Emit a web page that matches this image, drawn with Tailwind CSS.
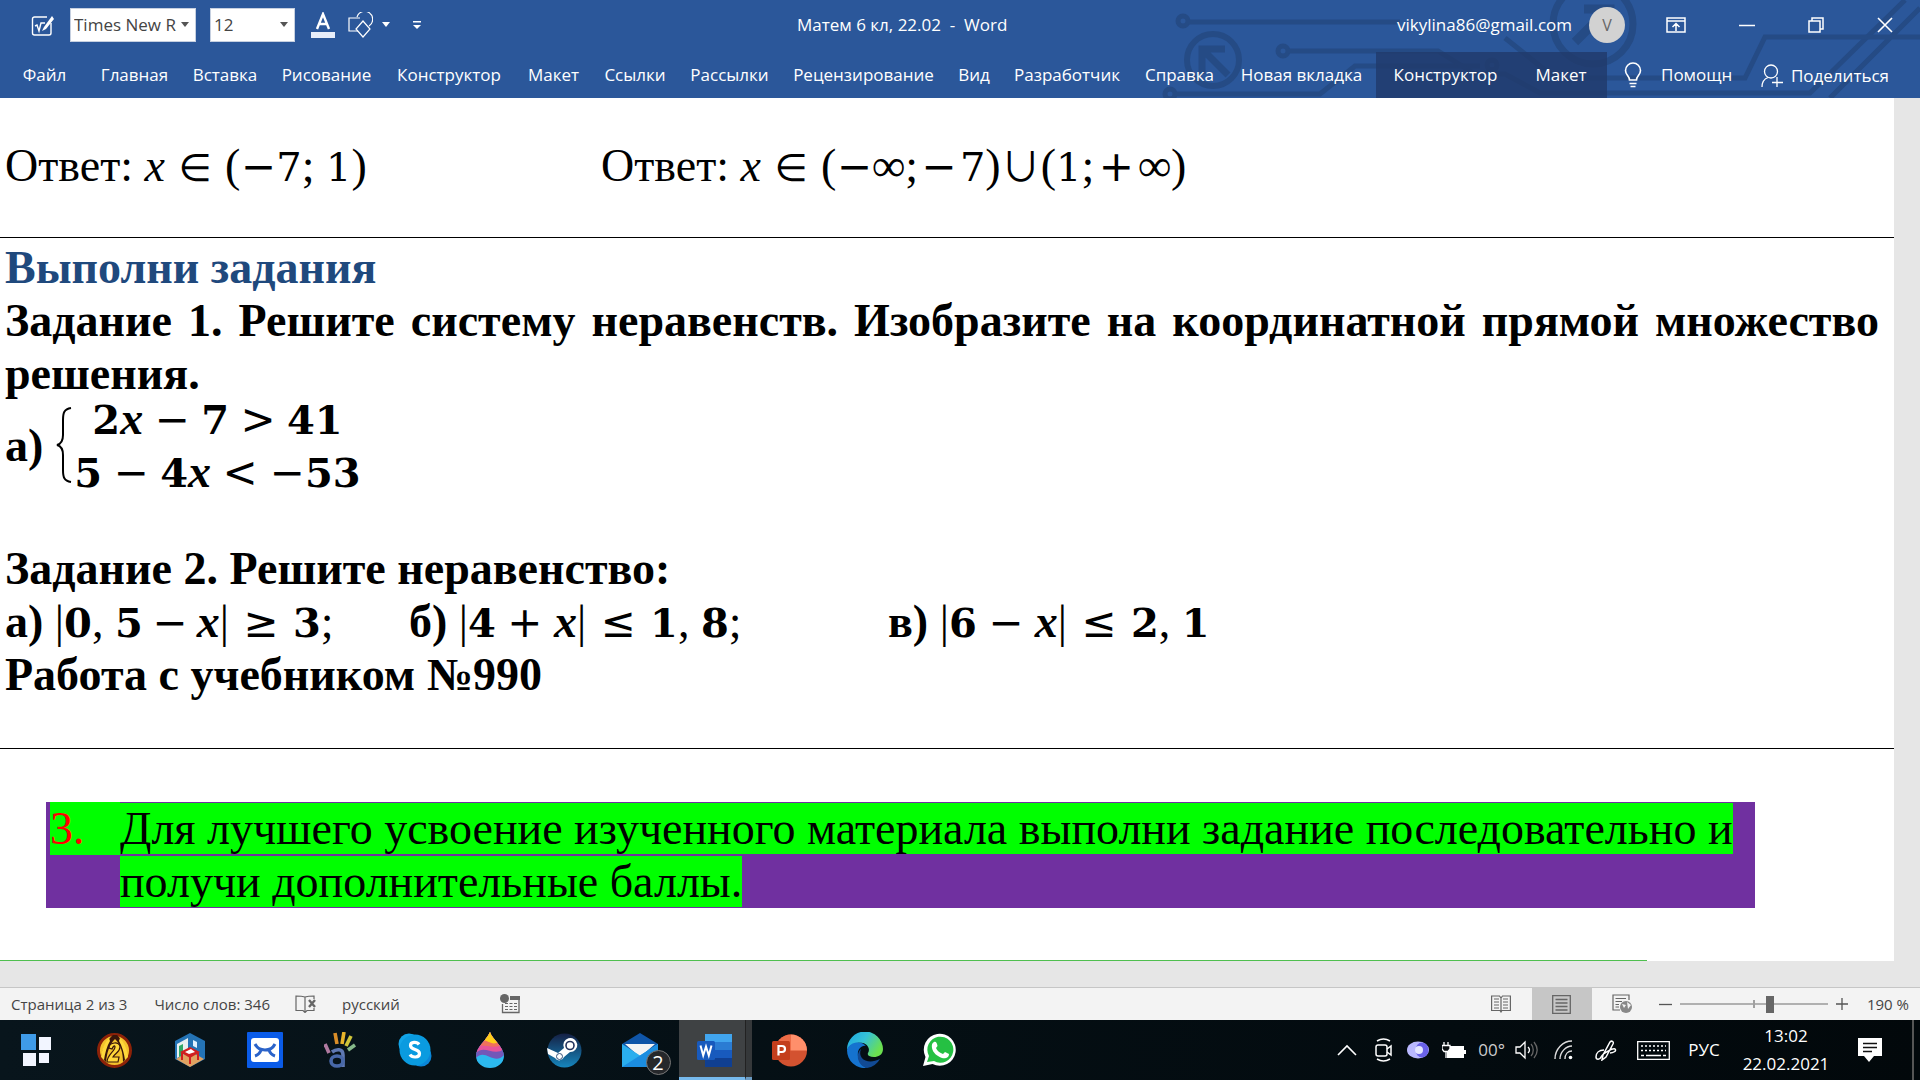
<!DOCTYPE html>
<html lang="ru">
<head>
    <meta charset="UTF-8">
    <meta name="viewport" content="width=device-width, initial-scale=1.0">
    <title>Матем 6 кл, 22.02 - Word</title>
    <script src="https://cdn.jsdelivr.net/npm/@tailwindcss/browser@4"></script>
</head>
<body class="flex h-screen flex-col overflow-hidden bg-[#e6e6e6] font-['Open_Sans','Noto_Sans',sans-serif] text-[17px]">

    <!-- Title bar and ribbon tabs -->
    <header class="relative shrink-0 bg-[#2b579a] text-white">
        <svg class="absolute top-0 right-0" width="760" height="98" viewBox="0 0 760 98" fill="none" stroke="#254b85" stroke-width="5">
            <circle cx="23" cy="21" r="5" /><path d="M28 22H240" />
            <circle cx="10" cy="94" r="5" /><path d="M15 94H160L195 66H320" />
            <circle cx="53" cy="60" r="26" stroke-width="6" /><path d="M68 75L44 51M42 74V49H65" stroke-width="7" />
            <circle cx="123" cy="51" r="5" /><path d="M128 51H278L315 74H345L380 93H650L745 0" />
            <circle cx="332" cy="65" r="5" />
            <circle cx="433" cy="24" r="40" stroke-width="7" /><path d="M415 42L445 12M424 9H450V34" stroke-width="9" />
            <path d="M345 38L395 78H585L605 37H760M670 98L760 8" />
        </svg>

        <div class="relative flex h-[49px] items-center">
            <div class="flex w-[797px] items-center pl-[31px]">
                <button aria-label="Уравнение">
                    <svg width="24" height="24" viewBox="0 0 24 24" fill="none" stroke="#fff" stroke-width="1.4"><path d="M16 4H3.500a2 2 0 0 0-2 2V20a2 2 0 0 0 2 2H18a2 2 0 0 0 2-2V10" /><path d="M4 13l2-1 2 6 2-8h4" /><path d="M21 3L13 14l-2 4 4-2 8-10z" fill="#fff" stroke="none" /></svg>
                </button>
                <div class="relative ml-[15px]">
                    <select aria-label="Шрифт" class="h-[34px] w-[126px] appearance-none border border-[#c6d0e0] bg-white pl-[3px] text-[#444]"><option>Times New R</option></select>
                    <svg class="pointer-events-none absolute top-[14px] right-[7px]" width="8" height="5"><path d="M0 0H8L4 5z" fill="#555" /></svg>
                </div>
                <div class="relative ml-[14px]">
                    <select aria-label="Размер шрифта" class="h-[34px] w-[85px] appearance-none border border-[#c6d0e0] bg-white pl-[3px] text-[#444]"><option>12</option></select>
                    <svg class="pointer-events-none absolute top-[14px] right-[7px]" width="8" height="5"><path d="M0 0H8L4 5z" fill="#555" /></svg>
                </div>
                <button aria-label="Цвет текста" class="ml-[16px] flex flex-col items-center">
                    <svg width="24" height="26" viewBox="0 0 24 26"><path d="M6 17L12 2L18 17M8 12H16" fill="none" stroke="#fff" stroke-width="2.400" /><path d="M0 20H24V26H0z" fill="#e8eefa" /></svg>
                </button>
                <button aria-label="Фигуры" class="ml-[13px] flex items-center gap-[9px]">
                    <svg width="25" height="26" viewBox="0 0 25 26" fill="none" stroke="#fff" stroke-width="1.200"><path d="M10 19H1V6H12" /><path d="M9 5A8 8 0 1 1 21 14" /><path d="M15 9L22 17L15 25L8 17z" /></svg>
                    <svg width="8" height="5"><path d="M0 0H8L4 5z" fill="#fff" /></svg>
                </button>
                <button aria-label="Настройка панели" class="ml-[23px]">
                    <svg width="8" height="8"><path d="M0 0H8V1.500H0zM0 4H8L4 8z" fill="#fff" /></svg>
                </button>
            </div>
            <h1 class="whitespace-pre">Матем 6 кл, 22.02  -  Word</h1>
            <div class="ml-auto flex items-center pr-[27px]">
                <span>vikylina86@gmail.com</span>
                <button aria-label="Учётная запись" class="ml-[17px] size-[36px] rounded-full bg-[#d2d2d2] text-[16px] text-[#666]">V</button>
                <button aria-label="Параметры ленты" class="ml-[41px]"><svg width="20" height="16" viewBox="0 0 20 16" fill="none" stroke="#fff" stroke-width="1.500"><path d="M1 1H19V15H1zM1 4H19M10 14V7M6.500 10L10 6.500L13.500 10" /></svg></button>
                <button aria-label="Свернуть" class="ml-[53px]"><svg width="16" height="16"><path d="M0 8.500H16" stroke="#fff" stroke-width="1.500" /></svg></button>
                <button aria-label="Восстановить" class="ml-[53px]"><svg width="16" height="16" fill="none" stroke="#fff" stroke-width="1.500"><path d="M1 4H12V15H1zM4 4V1H15V12H12" /></svg></button>
                <button aria-label="Закрыть" class="ml-[53px]"><svg width="16" height="16"><path d="M1 1L15 15M15 1L1 15" stroke="#fff" stroke-width="1.600" /></svg></button>
            </div>
        </div>

        <nav class="relative flex h-[49px] items-stretch whitespace-nowrap">
            <button class="w-[89px] pt-[2px]">Файл</button>
            <button class="w-[91px] pt-[2px]">Главная</button>
            <button class="w-[90px] pt-[2px]">Вставка</button>
            <button class="w-[113px] pt-[2px]">Рисование</button>
            <button class="w-[132px] pt-[2px]">Конструктор</button>
            <button class="w-[77px] pt-[2px]">Макет</button>
            <button class="w-[86px] pt-[2px]">Ссылки</button>
            <button class="w-[103px] pt-[2px]">Рассылки</button>
            <button class="w-[165px] pt-[2px]">Рецензирование</button>
            <button class="w-[56px] pt-[2px]">Вид</button>
            <button class="w-[130px] pt-[2px]">Разработчик</button>
            <button class="w-[95px] pt-[2px]">Справка</button>
            <button class="w-[149px] pt-[2px]">Новая вкладка</button>
            <div class="mt-[3px] flex bg-[#20396a]/80">
                <button class="w-[139px]">Конструктор</button>
                <button class="w-[92px]">Макет</button>
            </div>
            <button class="ml-[17px] flex items-center gap-[19px] pt-[2px]">
                <svg width="18" height="26" viewBox="0 0 18 26" fill="none" stroke="#fff" stroke-width="1.600"><path d="M5.500 18C5.500 14 1.500 13 1.500 8.500a7.500 7.500 0 0 1 15 0C16.500 13 12.500 14 12.500 18zM5.500 21.500H12.500M6.500 24.500H11.500" /></svg>
                Помощн
            </button>
            <button class="mr-[31px] ml-auto flex items-center gap-[8px] pt-[4px]">
                <svg width="22" height="24" viewBox="0 0 22 24" fill="none" stroke="#fff" stroke-width="1.300"><circle cx="10" cy="7.500" r="6.500" /><path d="M1 23C1 18 3 15 7 13.500M16 13V23M11 18.500H22" /></svg>
                Поделиться
            </button>
        </nav>
    </header>

    <!-- Document page -->
    <main class="mr-[26px] flex-1 bg-white font-['Liberation_Serif',serif] text-[46px] leading-[53px] text-black">
        <section class="flex h-[140px] items-center border-b border-black pb-[4px] pl-[5px] whitespace-pre">
            <p class="w-[596px]">Ответ: <i>x</i><span class="inline-block w-[60px] text-center font-['DejaVu_Sans'] text-[38px] leading-none">∈</span>(<span class="inline-block w-[36px] text-center font-['DejaVu_Sans'] text-[42px] leading-none">−</span><span class="font-['DejaVu_Serif'] text-[40px] leading-none">7</span>; <span class="font-['DejaVu_Serif'] text-[40px] leading-none">1</span>)</p>
            <p>Ответ: <i>x</i><span class="inline-block w-[60px] text-center font-['DejaVu_Sans'] text-[38px] leading-none">∈</span>(<span class="inline-block w-[36px] text-center font-['DejaVu_Sans'] text-[42px] leading-none">−</span><i>∞</i>;<span class="inline-block w-[42px] text-center font-['DejaVu_Sans'] text-[42px] leading-none">−</span><span class="font-['DejaVu_Serif'] text-[40px] leading-none">7</span>)<span class="inline-block w-[40px] text-center font-['Noto_Sans_CJK_JP'] text-[40px] leading-none">∪</span>(<span class="font-['DejaVu_Serif'] text-[40px] leading-none">1</span>;<span class="inline-block w-[44px] text-center font-['DejaVu_Sans'] text-[42px] leading-none">+</span><i>∞</i>)</p>
        </section>

        <section class="h-[511px] border-b border-black pt-[3px] pr-[15px] pl-[5px] font-bold">
            <h2 class="text-[#1f497d]">Выполни задания</h2>
            <p class="text-justify">Задание 1. Решите систему неравенств. Изобразите на координатной прямой множество решения.</p>
            <div class="flex h-[90px] items-center">
                <span>а)</span>
                <svg class="mr-[2px] ml-[13px]" width="16" height="76" viewBox="0 0 16 76" fill="none" stroke="#000" stroke-width="2"><path d="M15 1C8 2 7 6 7 13V28C7 34 5 37 1 38C5 39 7 42 7 48V63C7 70 8 74 15 75" /></svg>
                <div class="text-center">
                    <p><span class="font-['DejaVu_Serif'] text-[40px] leading-none">2</span><i>x</i><span class="inline-block w-[58px] text-center font-['DejaVu_Sans'] text-[42px] font-normal leading-none">−</span><span class="font-['DejaVu_Serif'] text-[40px] leading-none">7</span><span class="inline-block w-[58px] text-center font-['DejaVu_Sans'] text-[42px] font-normal leading-none">&gt;</span><span class="font-['DejaVu_Serif'] text-[40px] leading-none">41</span></p>
                    <p><span class="font-['DejaVu_Serif'] text-[40px] leading-none">5</span><span class="inline-block w-[58px] text-center font-['DejaVu_Sans'] text-[42px] font-normal leading-none">−</span><span class="font-['DejaVu_Serif'] text-[40px] leading-none">4</span><i>x</i><span class="inline-block w-[58px] text-center font-['DejaVu_Sans'] text-[42px] font-normal leading-none">&lt;</span><span class="inline-block w-[36px] text-center font-['DejaVu_Sans'] text-[42px] font-normal leading-none">−</span><span class="font-['DejaVu_Serif'] text-[40px] leading-none">53</span></p>
                </div>
            </div>
            <h3 class="mt-[52px]">Задание 2. Решите неравенство:</h3>
            <div class="flex whitespace-nowrap">
                <p class="w-[404px]">а) <span class="font-normal">|</span><span class="font-['DejaVu_Serif'] text-[40px] leading-none">0</span><span class="font-normal">,</span> <span class="font-['DejaVu_Serif'] text-[40px] leading-none">5</span><span class="inline-block w-[54px] text-center font-['DejaVu_Sans'] text-[42px] font-normal leading-none">−</span><i>x</i><span class="font-normal">|</span><span class="inline-block w-[64px] text-center font-['DejaVu_Sans'] text-[42px] font-normal leading-none">≥</span><span class="font-['DejaVu_Serif'] text-[40px] leading-none">3</span><span class="font-normal">;</span></p>
                <p class="w-[479px]">б) <span class="font-normal">|</span><span class="font-['DejaVu_Serif'] text-[40px] leading-none">4</span><span class="inline-block w-[58px] text-center font-['DejaVu_Sans'] text-[42px] font-normal leading-none">+</span><i>x</i><span class="font-normal">|</span><span class="inline-block w-[64px] text-center font-['DejaVu_Sans'] text-[42px] font-normal leading-none">≤</span><span class="font-['DejaVu_Serif'] text-[40px] leading-none">1</span><span class="font-normal">,</span> <span class="font-['DejaVu_Serif'] text-[40px] leading-none">8</span><span class="font-normal">;</span></p>
                <p>в) <span class="font-normal">|</span><span class="font-['DejaVu_Serif'] text-[40px] leading-none">6</span><span class="inline-block w-[58px] text-center font-['DejaVu_Sans'] text-[42px] font-normal leading-none">−</span><i>x</i><span class="font-normal">|</span><span class="inline-block w-[64px] text-center font-['DejaVu_Sans'] text-[42px] font-normal leading-none">≤</span><span class="font-['DejaVu_Serif'] text-[40px] leading-none">2</span><span class="font-normal">,</span> <span class="font-['DejaVu_Serif'] text-[40px] leading-none">1</span></p>
            </div>
            <p>Работа с учебником №990</p>
        </section>

        <ol class="mt-[53px] ml-[46px] w-[1709px] max-w-full bg-[#7030a0] pl-[4px]">
            <li class="flex">
                <span class="h-[53px] w-[70px] shrink-0 bg-[#00ff00] text-[#ff0000]">3.</span>
                <p><span class="bg-[#00ff00]">Для лучшего усвоение изученного материала выполни задание последовательно и получи дополнительные баллы.</span></p>
            </li>
        </ol>
        <hr class="mt-[52px] w-[1647px] border-[#4fbf4f]">
    </main>

    <!-- Status bar -->
    <footer class="mt-[26px] flex h-[33px] shrink-0 items-center border-t border-[#c6c6c6] bg-[#f3f3f3] text-[15px] text-[#444]">
        <span class="ml-[11px]">Страница 2 из 3</span>
        <span class="ml-[27px]">Число слов: 346</span>
        <button aria-label="Правописание" class="ml-[25px]"><svg width="22" height="18" viewBox="0 0 22 18" fill="none" stroke="#666" stroke-width="1.200"><path d="M10 17V2C7 1 4 1 1 1V15.500H8L10 17.500L12 15.500H19V13M10 2C13 1 16 1 19 1V4" /><path d="M14 5L20 12M20 5L14 12" stroke-width="2.400" /></svg></button>
        <button class="ml-[25px]">русский</button>
        <button aria-label="Запись макроса" class="ml-[100px]"><svg width="20" height="20" viewBox="0 0 20 20"><circle cx="4.500" cy="4.500" r="4.500" fill="#666" /><path d="M10 2H20V6H10z" fill="#666" /><path d="M2.500 10V18.500H19V6" fill="none" stroke="#666" stroke-width="1.300" /><path d="M5 9.500H17M5 12.500H17M5 15.500H17" fill="none" stroke="#666" stroke-width="1.200" stroke-dasharray="3 1.500" /></svg></button>

        <div class="ml-auto flex h-full items-center">
            <button aria-label="Режим чтения"><svg width="20" height="18" viewBox="0 0 20 18" fill="none" stroke="#666" stroke-width="1.200"><path d="M10 3V18M.600 1H8.500L10 3L11.500 1H19.400V15.500H11L10 17L9 15.500H.600zM3 4H8M3 7H8M3 10H8M3 13H8M12 4H17M12 7H17M12 10H17M12 13H17" /></svg></button>
            <button aria-label="Разметка страницы" class="ml-[21px] flex h-full w-[60px] items-center justify-center bg-[#c6c6c6]"><svg width="19" height="19" viewBox="0 0 19 19" fill="none" stroke="#666" stroke-width="1.300"><path d="M.700.700H18.300V18.300H.700zM3.500 4.500H15.500M3.500 8H15.500M3.500 11.500H15.500M3.500 15H15.500" /></svg></button>
            <button aria-label="Веб-документ" class="ml-[20px]"><svg width="20" height="20" viewBox="0 0 20 20" fill="none" stroke="#666" stroke-width="1.200"><path d="M8 16H1V1H17V6M3.500 4.500H14M3.500 7.500H10M3.500 10.500H7M3.500 13H7" /><circle cx="14" cy="13" r="6" fill="#888" stroke="none" /><path d="M10 10L14 11L12 14zM15 8L19 11L16 15z" fill="#f3f3f3" stroke="none" /></svg></button>
            <button aria-label="Уменьшить" class="ml-[27px]"><svg width="13" height="13"><path d="M0 6.500H13" stroke="#555" stroke-width="1.300" /></svg></button>
            <div class="relative ml-[8px] h-[18px] w-[148px]">
                <div class="absolute top-[8px] h-[2px] w-full bg-[#b0b0b0]"></div>
                <div class="absolute top-[5px] left-[73px] h-[8px] w-[2px] bg-[#a0a0a0]"></div>
                <input type="range" min="10" max="500" value="312" aria-label="Масштаб" class="absolute inset-0 h-[18px] w-full appearance-none bg-transparent [&::-webkit-slider-thumb]:h-[17px] [&::-webkit-slider-thumb]:w-[8px] [&::-webkit-slider-thumb]:appearance-none [&::-webkit-slider-thumb]:bg-[#666]">
            </div>
            <button aria-label="Увеличить" class="ml-[8px]"><svg width="12" height="12"><path d="M0 6H12M6 0V12" stroke="#555" stroke-width="1.300" /></svg></button>
            <button class="mr-[11px] ml-[19px]">190 %</button>
        </div>
    </footer>

    <!-- Taskbar -->
    <footer class="flex h-[60px] shrink-0 items-stretch bg-linear-to-r from-[#08151c] to-[#02080b] text-white">
        <button aria-label="Пуск" class="flex w-[77px] items-center pl-[21px]"><svg width="30" height="32" viewBox="0 0 30 32"><path d="M0 0H15V16H0z" fill="#3f9be8" /><path d="M18 3H30V16H18zM2 19H15V32H2zM18 19H28V29H18z" fill="#f2f5ff" /></svg></button>
        <button aria-label="Игра" class="flex w-[75px] items-center justify-center"><svg width="35" height="35" viewBox="0 0 35 35"><circle cx="17.500" cy="17.500" r="16" fill="#f4c32c" stroke="#8c2208" stroke-width="3" /><path d="M4 24C6 14 10 7 16 2H20C26 8 29 16 30 25L26 29C26 20 24 12 18 6C12 12 10 20 9 29z" fill="#38150a" /><path d="M4 24C5 16 8 9 12 5L13 8C10 13 8 20 7 27zM31 24C30 16 27 9 23 5L22 8C25 13 27 20 28 27z" fill="#ffd83b" /><path d="M12 15C12 9 23 8 23 14C23 19 18 20 16 24H22L21 29H10C10 22 18 18 18 14C18 12 16 13 15 16z" fill="#ffd83b" stroke="#38150a" stroke-width="1.200" /></svg></button>
        <button aria-label="Дизайн дома" class="flex w-[75px] items-center justify-center"><svg width="30" height="34" viewBox="0 0 30 34"><path d="M15 0L30 8V26L15 34L0 26V8z" fill="#2473b5" /><path d="M2 11L13 5V19L2 25z" fill="#e8f0f0" /><path d="M4 13L8 11V22L4 24z" fill="#2fa866" /><path d="M18 7L22 9V15L18 13z" fill="#dff1ff" /><path d="M1 26L15 18L29 26L15 34z" fill="#e0a260" /><path d="M5 19L15 14L25 19L15 25zM6 20H8V27H6zM14 24H16V31H14zM22 20H24V27H22z" fill="#d01f1f" /><path d="M10 19L16 16L20 19L14 21z" fill="#fff" /></svg></button>
        <button aria-label="Почта Mail" class="flex w-[75px] items-center justify-center"><svg width="36" height="36" viewBox="0 0 36 36"><rect width="36" height="36" rx="1" fill="#0a5be8" /><rect x="4" y="6" width="28" height="24" rx="3" fill="#fff" /><path d="M8 12C12 20 24 20 28 12M8 24C11 23 13 21 14 18M28 24C25 23 23 21 22 18" fill="none" stroke="#2b63c9" stroke-width="3" /></svg></button>
        <button aria-label="Ладонь" class="flex w-[75px] items-center justify-center"><svg width="32" height="36" viewBox="0 0 32 36" fill="none" stroke-width="3.600"><path d="M11 1L13 12" stroke="#d98d28" /><path d="M20 0L18 12" stroke="#e8b42a" /><path d="M27 4L22 14" stroke="#cfc53a" /><path d="M31 13L24 18" stroke="#86b98a" /><path d="M1 12L5 21" stroke="#b07aa0" /><path d="M8 20C12 17 19 16 19 23V35" stroke="#5f79b3" /><ellipse cx="13" cy="29" rx="6" ry="5" stroke="#4868a8" /></svg></button>
        <button aria-label="Skype" class="flex w-[75px] items-center justify-center"><svg width="34" height="34" viewBox="0 0 34 34"><circle cx="11" cy="11" r="10.500" fill="#12a5e8" /><circle cx="23" cy="23" r="10.500" fill="#0a86d8" /><circle cx="17" cy="17" r="15.500" fill="#0a9be0" /><path d="M21 11.500C19 8.500 12.500 8.500 12.500 12.500C12.500 17.500 21.500 15.500 21.500 20.500C21.500 25 14 25 12 21.500" fill="none" stroke="#fff" stroke-width="3.200" /></svg></button>
        <button aria-label="Paint 3D" class="flex w-[75px] items-center justify-center"><svg width="28" height="36" viewBox="0 0 28 36"><defs><clipPath id="drop"><path d="M14 0C16 7 28 15 28 24A14 12 0 0 1 0 24C0 15 10 9 14 0z" /></clipPath></defs><g clip-path="url(#drop)"><path d="M0 0H28V36H0z" fill="#2cb9ef" /><path d="M0 26C9 16 18 34 28 23V0H0z" fill="#7357b8" /><path d="M0 21C8 12 18 25 28 17V0H0z" fill="#e8549a" /><path d="M0 14C10 12 18 18 28 12V0H0z" fill="#f0715c" /><path d="M5 8C13 8 15 14 23 10V0H5z" fill="#ffcf1a" /></g></svg></button>
        <button aria-label="Steam" class="flex w-[75px] items-center justify-center"><svg width="35" height="35" viewBox="0 0 35 35"><defs><linearGradient id="steam" x1="0" y1="0" x2="0" y2="1"><stop offset="0" stop-color="#152044" /><stop offset="1" stop-color="#1686bd" /></linearGradient></defs><circle cx="17.500" cy="17.500" r="17" fill="url(#steam)" /><path d="M0 15L11 20L17 15A7 7 0 1 1 23 19L17 24A5 5 0 0 1 8 25L1 21z" fill="#fff" /><circle cx="23" cy="12.500" r="4" fill="#fff" stroke="#22325c" stroke-width="1.600" /><circle cx="12.500" cy="23.500" r="3" fill="none" stroke="#33507a" /></svg></button>
        <button aria-label="Почта" class="flex w-[75px] items-center justify-center"><span class="relative"><svg width="36" height="34" viewBox="0 0 36 34"><path d="M0 11L18 0L36 11V20H0z" fill="#0f55a8" /><path d="M3 11H33L18 24z" fill="#f4f4f4" /><path d="M0 11L18 22.500L36 11V34H0z" fill="#2aaeee" /><path d="M36 11L0 34H36z" fill="#1b8de0" /></svg><span class="absolute -right-[13px] -bottom-[8px] flex size-[25px] items-center justify-center rounded-full border border-[#777] bg-[#26282b] text-[20px] leading-none">2</span></span></button>
        <button aria-label="Word" class="ml-[2px] flex w-[66px] items-center justify-center border-b-[3px] border-[#76b9ed] bg-[#3f4244]"><svg class="mt-[3px] ml-[5px]" width="36" height="33" viewBox="0 0 36 33"><path d="M8 0H35V9H8z" fill="#41a5ee" /><path d="M8 8H35V17H8z" fill="#2b7cd3" /><path d="M8 16H35V25H8z" fill="#185abd" /><path d="M8 24H35V33H8z" fill="#103f91" /><rect y="7" width="18" height="19" rx="1.500" fill="#185abd" /><path d="M3.500 11.500L6.200 21.500L9 12.500L11.800 21.500L14.500 11.500" fill="none" stroke="#fff" stroke-width="2" /></svg></button>
        <div class="w-[7px] border-b-[3px] border-l border-[#6b9cc4] border-l-[#222] bg-[#35383a]"></div>
        <button aria-label="PowerPoint" class="flex w-[75px] items-center justify-center"><svg width="35" height="33" viewBox="0 0 35 33"><circle cx="19" cy="16.500" r="16" fill="#d35230" /><path d="M19 .500A16 16 0 0 1 35 16.500H19z" fill="#ff8f6b" /><path d="M19 .500A16 16 0 0 0 3 16.500H19z" fill="#ed6c47" /><rect y="7" width="18" height="19" rx="1.500" fill="#c43e1c" /><path d="M6.500 21.500V12H10A2.900 2.900 0 0 1 10 18H6.500" fill="none" stroke="#fff" stroke-width="2.200" /></svg></button>
        <button aria-label="Edge" class="flex w-[75px] items-center justify-center"><svg width="36" height="36" viewBox="0 0 36 36"><defs><linearGradient id="edge" x1="0" y1="0" x2="1" y2=".5"><stop offset="0" stop-color="#1ba5e0" /><stop offset=".5" stop-color="#35c1d8" /><stop offset="1" stop-color="#6be04f" /></linearGradient></defs><path d="M0 18A18 18 0 0 1 36 17C36 23 31 25 27 25C22 25 20 23 21 21C23 18 22 13 16 11C10 10 3 12 0 18z" fill="url(#edge)" /><path d="M0 18C2 10 14 8 19 14C14 13 10 18 11 24C12 31 17 35 20 36A18 18 0 0 1 0 18z" fill="#1573cf" /><path d="M14 17C10 27 21 33 33 27A18 18 0 0 1 20 36C11 34 8 22 14 17z" fill="#114a94" /></svg></button>
        <button aria-label="WhatsApp" class="flex w-[75px] items-center justify-center"><svg width="34" height="34" viewBox="0 0 34 34"><path d="M0 33L2.500 24A16 16 0 1 1 9.500 31z" fill="#fff" /><path d="M4 29L6 23A13 13 0 1 1 11 28z" fill="#25c043" /><path d="M11 9C13 8 14 10 14.500 13L13 15C14 18 17 20 20 21L22 19L26 21C26 25 22 26 19 25C14 23 10 20 9 15C8.500 12 9 10 11 9z" fill="#fff" /></svg></button>

        <div class="ml-auto flex items-center">
            <button aria-label="Скрытые значки"><svg width="20" height="12" fill="none" stroke="#fff" stroke-width="1.600"><path d="M1 11L10 2L19 11" /></svg></button>
            <button aria-label="Камера" class="ml-[18px]"><svg width="18" height="24" viewBox="0 0 18 24" fill="none" stroke="#fff" stroke-width="1.500"><rect x="1" y="7" width="11" height="11" rx="2" /><path d="M12 11L16 8V17L12 14M2 3C6 .500 11 .500 15 3M2 21C6 23.500 11 23.500 15 21" /></svg></button>
            <button aria-label="Viber" class="ml-[14px]"><svg width="22" height="18" viewBox="0 0 22 18"><ellipse cx="11" cy="9" rx="11" ry="8.500" fill="#b9b8ff" /><ellipse cx="15" cy="9" rx="6.500" ry="7.500" fill="#6a62e8" /><circle cx="12" cy="9" r="4" fill="#e4e6ff" /></svg></button>
            <button aria-label="Батарея" class="ml-[13px]"><svg width="24" height="18" viewBox="0 0 24 18"><path d="M5.700 5.700H21.300V16.300H5.700z" fill="#fff" stroke="#fff" stroke-width="1.400" /><path d="M22 9H24V13H22z" fill="#fff" /><path d="M0 4.500H8V8L6 10.500H2L0 8zM2 1V4.500M6 1V4.500M4 10.500V17" fill="#080d10" stroke="#fff" stroke-width="1.300" /></svg></button>
            <button class="ml-[12px] text-[#ccc]">00°</button>
            <button aria-label="Громкость" class="ml-[10px]"><svg width="24" height="20" viewBox="0 0 24 20" fill="none" stroke="#fff" stroke-width="1.300"><path d="M1 7H5L10 2V18L5 13H1z" /><path d="M13 7C15 9 15 11 13 13" /><path d="M16 4C19 7 19 13 16 16M19 2C23 7 23 13 19 18" stroke="#666" /></svg></button>
            <button aria-label="Сеть" class="ml-[15px]"><svg width="20" height="20" viewBox="0 0 20 20" fill="none" stroke="#ddd" stroke-width="1.400"><path d="M1 19C1 9 9 1 18 1M6 19C6 12 12 6 18 6M11 19C11 14 14 11 18 11" /><circle cx="16.500" cy="17.500" r="1.800" fill="#fff" stroke="none" /></svg></button>
            <button aria-label="Перо" class="ml-[21px]"><svg width="22" height="21" viewBox="0 0 22 21" fill="none" stroke="#fff" stroke-width="1.500"><path d="M7 20L8 15L15 2C17 0 19 2 18 4L11 17zM9 10C4 10 1 13 1 17C1 20 5 20 6 17C8 13 18 8 20 9C22 11 18 13 15 13" /></svg></button>
            <button aria-label="Клавиатура" class="ml-[20px]"><svg width="33" height="19" viewBox="0 0 33 19" fill="none" stroke="#fff" stroke-width="1.300"><path d="M.700.700H32.300V18.300H.700z" /><path d="M4 5H29M4 9.500H29" stroke-dasharray="2 2" /><path d="M4 14.500H7M9 14.500H24M26 14.500H29" /></svg></button>
            <button class="w-[68px] text-center">РУС</button>
            <button class="w-[96px] text-center leading-[28px]">13:02<br>22.02.2021</button>
            <button aria-label="Уведомления" class="ml-[24px]"><svg width="24" height="24" viewBox="0 0 24 24"><path d="M0 0H24V18H16L11 24L6 18H0z" fill="#fff" /><path d="M5 5.500H19M5 9.500H19M5 13.500H14" stroke="#111" stroke-width="1.300" /></svg></button>
            <div class="mr-[6px] ml-[30px] h-[60px] w-[2px] bg-[#555]"></div>
        </div>
    </footer>
</body>
</html>
